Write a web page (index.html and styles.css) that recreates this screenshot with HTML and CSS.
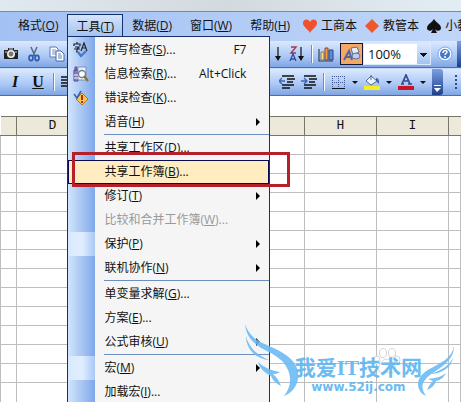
FILE: index.html
```html
<!DOCTYPE html>
<html lang="zh-CN">
<head>
  <meta charset="UTF-8">
  <meta name="viewport" content="width=device-width, initial-scale=1.0">
  <title>Excel</title>
  <link rel="stylesheet" href="styles.css">
</head>
<body>
  <div class="titlebar"></div>
  <nav class="menubar">
    <button class="menu-btn">格式(<u>O</u>)</button>
    <div class="menu-holder">
      <button class="menu-btn open">工具(<u>T</u>)</button>
      <div class="menu">
        <button class="item">
          <svg class="ico" width="16" height="16" viewBox="0 0 16 16"><path d="M4 0v2M1 4V2h6v2M2 5h4L4 7v3H3M1 7h6M8 9l3-8 3 8M9 6h4" fill="none" stroke="#223" stroke-width="1.2"/><path d="M5 10l3 4 5-5" fill="none" stroke="#4a78c8" stroke-width="2.4"/></svg>
          <span>拼写检查(<u>S</u>)...</span><kbd>F7</kbd>
        </button>
        <button class="item">
          <svg class="ico" width="16" height="16" viewBox="0 0 16 16"><path d="M1 4h4v11H1zM2 1h2v3H2z" fill="#8a7cc4" stroke="#56508c"/><path d="M5 1h8v13H5z" fill="#eef2fa" stroke="#8090b0"/><path d="M1 9h4M1 12h4" stroke="#fff"/><circle cx="9" cy="8" r="3.5" fill="#fff" stroke="#6a7c98" stroke-width="1.3"/><path d="M11 10l4 5" stroke="#8a7030" stroke-width="2.2"/></svg>
          <span>信息检索(<u>R</u>)...</span><kbd>Alt+Click</kbd>
        </button>
        <button class="item">
          <svg class="ico" width="16" height="16" viewBox="0 0 16 16"><path d="M9 3l6 6-6 6-6-6z" fill="#fcc64c" stroke="#b07820"/><path d="M9 5v5M9 11v2" stroke="#c02818" stroke-width="2"/><path d="M1 4l3 4 4-7" fill="none" stroke="#3a64b0" stroke-width="1.6"/></svg>
          <span>错误检查(<u>K</u>)...</span>
        </button>
        <button class="item sub"><span>语音(<u>H</u>)</span></button>
        <hr>
        <button class="item"><span>共享工作区(<u>D</u>)...</span></button>
        <button class="item active"><span>共享工作簿(<u>B</u>)...</span></button>
        <button class="item sub"><span>修订(<u>T</u>)</span></button>
        <button class="item" disabled><span>比较和合并工作簿(<u>W</u>)...</span></button>
        <button class="item sub fresh"><span>保护(<u>P</u>)</span></button>
        <button class="item sub"><span>联机协作(<u>N</u>)</span></button>
        <hr>
        <button class="item"><span>单变量求解(<u>G</u>)...</span></button>
        <button class="item"><span>方案(<u>E</u>)...</span></button>
        <button class="item sub"><span>公式审核(<u>U</u>)</span></button>
        <hr>
        <button class="item sub fresh"><span>宏(<u>M</u>)</span></button>
        <button class="item"><span>加载宏(<u>I</u>)...</span></button>
        <div class="marker"></div>
      </div>
    </div>
    <button class="menu-btn">数据(<u>D</u>)</button>
    <button class="menu-btn">窗口(<u>W</u>)</button>
    <button class="menu-btn">帮助(<u>H</u>)</button>
    <button class="book-btn"><svg width="14" height="14" viewBox="0 0 14 14"><path d="M7 14C5 10 0 8 0 4C0 0 5-1 7 3C9-1 14 0 14 4C14 8 9 10 7 14z" fill="#f0502c"/></svg>工商本</button>
    <button class="book-btn"><svg width="14" height="14" viewBox="0 0 14 14"><path d="M7 0l7 7-7 7-7-7z" fill="#f0582c"/></svg>教管本</button>
    <button class="book-btn"><svg width="14" height="14" viewBox="0 0 14 14"><path d="M7 0C9 4 14 5 14 9C14 12 10 13 8 10L10 14H4L6 10C4 13 0 12 0 9C0 5 5 4 7 0z" fill="#111"/></svg>小教</button>
  </nav>

  <div class="toolbar standard">
    <div class="group">
      <button class="tool" aria-label="照相机"><svg width="16" height="16" viewBox="0 0 16 16"><path d="M1 4h4V2h6v2h4v9H1z" fill="#222"/><circle cx="8" cy="8" r="4" fill="#eee"/><circle cx="8" cy="8" r="2.4" fill="#777"/><path d="M2 6h2M12 6h2M6 3h4" stroke="#ddd"/></svg></button>
      <button class="tool" aria-label="剪切"><svg width="16" height="16" viewBox="0 0 16 16"><path d="M5 1l4 9M11 1L7 10" stroke="#566a8c" stroke-width="1.5"/><ellipse cx="5" cy="12" rx="2" ry="2.6" fill="none" stroke="#2c5cae" stroke-width="1.6"/><ellipse cx="11" cy="12" rx="2" ry="2.6" fill="none" stroke="#2c5cae" stroke-width="1.6"/></svg></button>
      <button class="tool" aria-label="复制"><svg width="16" height="16" viewBox="0 0 16 16"><path d="M1 1h6l2 2v8H1z" fill="#fff" stroke="#5878b4"/><path d="M3 4h4M3 6h4M3 8h4" stroke="#7894c8"/><path d="M7 5h5l3 3v7H7z" fill="#fff" stroke="#4868a8"/><path d="M9 8h3M9 10h4M9 12h4" stroke="#5c80c0"/></svg></button>
    </div>
    <button class="tool" aria-label="升序排序"><svg width="16" height="16" viewBox="0 0 16 16"><path d="M11 1v12" stroke="#111" stroke-width="1.2"/><path d="M8 10h6l-3 5z" fill="#111"/></svg></button>
    <button class="tool" aria-label="降序排序"><svg width="16" height="16" viewBox="0 0 16 16"><path d="M2 1h5L2 7h5" fill="none" stroke="#a03a50" stroke-width="1.4"/><path d="M1 15l3-7 3 7M2 13h4" fill="none" stroke="#2c50a0" stroke-width="1.3"/><path d="M12 1v12" stroke="#111" stroke-width="1.2"/><path d="M9 10h6l-3 5z" fill="#111"/></svg></button>
    <span class="sep"></span>
    <button class="tool" aria-label="图表向导"><svg width="16" height="16" viewBox="0 0 16 16"><path d="M1 3v12h14" fill="none" stroke="#345" stroke-width="1.2"/><path d="M3 6h3v8H3z" fill="#f8e070" stroke="#876"/><path d="M7 2h3v12H7z" fill="#f0a040" stroke="#843"/><path d="M11 4h4v10h-4z" fill="#5a8cdc" stroke="#347"/></svg></button>
    <button class="tool pressed" aria-label="绘图"><svg width="18" height="16" viewBox="0 0 18 16"><path d="M8 2l6-1 2 5-6 3z" fill="#e8eefc" stroke="#5870a0"/><path d="M1 14L6 5l3 9M3 11h5" fill="none" stroke="#4a68b0" stroke-width="2"/><ellipse cx="13" cy="10" rx="4" ry="3" fill="#c0ccec" stroke="#5870a0"/></svg></button>
    <select class="zoom" aria-label="显示比例"><option>100%</option></select>
    <button class="tool" aria-label="帮助"><svg width="16" height="16" viewBox="0 0 16 16"><circle cx="8" cy="8" r="7" fill="#f4f9ff" stroke="#7ba4e0"/><circle cx="8" cy="8" r="5" fill="#3f78cc"/><path d="M6 7c0-3 4-3 4-1 0 1.5-2 1.5-2 3M8 10v2" fill="none" stroke="#fff" stroke-width="1.5"/></svg></button>
    <span class="cap"></span>
  </div>

  <div class="toolbar format">
    <div class="group">
      <button class="tool letter" aria-label="倾斜"><i>I</i></button>
      <button class="tool letter" aria-label="下划线"><u>U</u></button>
      <span class="sep"></span>
      <button class="tool" aria-label="左对齐"><svg width="16" height="16" viewBox="0 0 16 16"><path d="M0 3h14M0 6h9M0 9h14M0 12h9" stroke="#111" stroke-width="1.5"/></svg></button>
    </div>
    <button class="tool" aria-label="减少缩进量"><svg width="16" height="16" viewBox="0 0 16 16"><path d="M3 2h12M8 5h8M8 8h6M3 11h12M3 14h8" stroke="#111" stroke-width="1.5"/><path d="M0 7h6M3 4L0 7l3 3" fill="none" stroke="#3c68b8" stroke-width="1.4"/></svg></button>
    <button class="tool" aria-label="增加缩进量"><svg width="16" height="16" viewBox="0 0 16 16"><path d="M3 2h12M8 5h8M8 8h6M3 11h12M3 14h8" stroke="#111" stroke-width="1.5"/><path d="M0 7h6M3 4l3 3-3 3" fill="none" stroke="#3c68b8" stroke-width="1.4"/></svg></button>
    <span class="sep"></span>
    <button class="tool drop" aria-label="边框"><svg width="16" height="16" viewBox="0 0 16 16"><path d="M2 2.5h13M2 8.500h13M2.500 2v12M8.500 2v12M14.500 2v12" stroke="#405890" stroke-dasharray="1 1"/><path d="M2 14.500h13" stroke="#111"/></svg></button>
    <button class="tool drop" aria-label="填充颜色"><svg width="16" height="16" viewBox="0 0 16 16"><path d="M7 2l6 5-6 4-5-4z" fill="#eef3fb" stroke="#56688c"/><path d="M7 6V1" stroke="#56688c"/><path d="M12 4c3 0 3 3 3 6l-3-3z" fill="#3860a8"/><path d="M0 12h16v4H0z" fill="#f4f020"/></svg></button>
    <button class="tool drop" aria-label="字体颜色"><svg width="16" height="16" viewBox="0 0 16 16"><path d="M3 10h3M10 10h4M4 10l4-9 4 9M6 7h4" fill="none" stroke="#304c90" stroke-width="1.7"/><path d="M0 12h16v4H0z" fill="#c81424"/></svg></button>
    <button class="cap more" aria-label="工具栏选项"><svg width="7" height="7" viewBox="0 0 7 7"><path d="M0 0h7v1H0zM0 3h7L3 7z" fill="#fff"/></svg></button>
    <span class="grip"></span>
  </div>

  <div class="formula"></div>

  <table class="sheet">
    <thead>
      <tr><th class="edge"></th><th>D</th><th></th><th></th><th></th><th>H</th><th>I</th><th class="rest"></th></tr>
    </thead>
    <tbody>
      <tr><td></td><td></td><td></td><td></td><td></td><td></td><td></td><td></td></tr>
      <tr><td></td><td></td><td></td><td></td><td></td><td></td><td></td><td></td></tr>
      <tr><td></td><td></td><td></td><td></td><td></td><td></td><td></td><td></td></tr>
      <tr><td></td><td></td><td></td><td></td><td></td><td></td><td></td><td></td></tr>
      <tr><td></td><td></td><td></td><td></td><td></td><td></td><td></td><td></td></tr>
      <tr><td></td><td></td><td></td><td></td><td></td><td></td><td></td><td></td></tr>
      <tr><td></td><td></td><td></td><td></td><td></td><td></td><td></td><td></td></tr>
      <tr><td></td><td></td><td></td><td></td><td></td><td></td><td></td><td></td></tr>
      <tr><td></td><td></td><td></td><td></td><td></td><td></td><td></td><td></td></tr>
      <tr><td></td><td></td><td></td><td></td><td></td><td></td><td></td><td></td></tr>
      <tr><td></td><td></td><td></td><td></td><td></td><td></td><td></td><td></td></tr>
      <tr><td></td><td></td><td></td><td></td><td></td><td></td><td></td><td></td></tr>
      <tr><td></td><td></td><td></td><td></td><td></td><td></td><td></td><td></td></tr>
      <tr class="last"><td></td><td></td><td></td><td></td><td></td><td></td><td></td><td></td></tr>
    </tbody>
  </table>

  <svg class="paw" width="28" height="26" viewBox="0 0 28 26"><g fill="#fff" stroke="#d4d4d4"><ellipse cx="10" cy="5" rx="3.5" ry="4.500"/><ellipse cx="19" cy="5" rx="3.500" ry="4.500"/><ellipse cx="4" cy="12" rx="3" ry="4"/><ellipse cx="24" cy="12" rx="3" ry="4"/><path d="M14 11c5 0 10 8 8 12-2 3-5 1-8 1s-6 2-8-1c-2-4 3-12 8-12z"/></g></svg>

  <div class="watermark">
    <svg class="wing" width="54" height="72" viewBox="0 0 54 72"><path d="M0 0C4 12 12 17 24 22C38 28 48 34 52 44C56 56 50 68 39 72C45 64 47 56 43 46C39 36 30 31 20 26C8 20 1 12 0 0z"/><path d="M1 12C4 24 12 31 24 36C12 35 1 26 1 12z"/><path d="M13 38C19 43 24 46 35 48C32 50 30 50 28 50C32 53 34 57 36 62C31 59 28 57 26 52C20 49 15 45 13 38z"/></svg>
    <div class="brand">
      <strong>我爱IT技术网</strong>
      <span>www.52ij.com</span>
    </div>
    <svg class="wing right" width="38" height="50" viewBox="0 0 38 50"><path d="M37 0C35 11 27 15 18 20C8 25 1 30 1 38C1 43 4 48 9 50C5 44 4 39 8 34C12 28 20 25 27 19C33 14 37 8 37 0z"/><path d="M36 12C32 19 26 24 13 28C24 28 34 22 36 12z"/><path d="M29 27C24 31 19 32 11 33L16 35C13 38 11 41 10 44C15 42 18 39 19 35C24 34 27 31 29 27z"/></svg>
  </div>
</body>
</html>
```

FILE: styles.css
```css
* {
  box-sizing: border-box;
}
body {
  margin: 0;
  height: 100vh;
  overflow: hidden;
  position: relative;
  background: #fff;
  color: #111;
  font: 12px/16px "Open Sans", "Noto Sans CJK SC", sans-serif;
}
button {
  margin: 0;
  padding: 0;
  border: 0;
  background: none;
  color: inherit;
  font: inherit;
}
.titlebar {
  height: 12px;
  background: linear-gradient(90deg, #dfe9f0, #d3dade 50%, #e3eef4);
  border-bottom: 1px solid #7c8a9c;
}
.menubar {
  display: flex;
  height: 29px;
  padding: 2px 0 5px 9px;
  background: linear-gradient(90deg, #a4c1f3, #c0d6f9);
  white-space: nowrap;
}
.menu-btn {
  height: 24px;
  padding: 0 9px;
  flex: none;
}
.menu-holder {
  position: relative;
  flex: none;
}
.open {
  height: 24px;
  padding: 0 8px;
  border: 1px solid #16306e;
  border-bottom: 0;
  background: linear-gradient(#d4e4fb, #9fbff0);
}
.book-btn {
  display: flex;
  align-items: center;
  gap: 4px;
  height: 24px;
  padding: 0 4px;
  flex: none;
}

/* dropdown */
.menu {
  position: absolute;
  z-index: 2;
  top: 22px;
  left: 0;
  width: 203px;
  padding: 1px 0;
  border: 1px solid #16306e;
  background: linear-gradient(90deg, #d2e5fc, #7fa8ea 27px, #f5f5f5 27px);
}
.item {
  position: relative;
  display: flex;
  align-items: center;
  width: 100%;
  height: 24px;
  padding: 0 23px 0 36px;
  text-align: left;
}
.item span {
  flex: 1;
}
.item kbd {
  font: inherit;
}
.item:disabled {
  color: #999;
}
.ico {
  position: absolute;
  left: 5px;
}
.sub::after {
  content: "";
  margin-right: -14px;
  border: 4px solid transparent;
  border-left-color: #000;
  border-right: 0;
}
.fresh {
  background: linear-gradient(90deg, #d9e9fd, #e0effe 14px, #a9c8f4 27px, transparent 27px);
}
.active {
  background: #ffecc0;
  outline: 1px solid #0a0a50;
  outline-offset: -1px;
}
.menu hr {
  height: 2px;
  margin: 0 0 0 36px;
  border: 0;
  border-top: 1px solid #6d8fc0;
}
.marker {
  position: absolute;
  top: 115px;
  left: 4px;
  width: 218px;
  height: 35px;
  border: 3px solid #b5202b;
}

/* toolbars */
.toolbar {
  display: flex;
  align-items: center;
  gap: 6px;
  height: 27px;
  background: linear-gradient(#dbe9fd, #a9c7f5 60%, #7fa5e2);
  border-bottom: 1px solid #4870b4;
}
.format {
  height: 28px;
  border-top: 1px solid #c4d8f8;
}
.group {
  display: flex;
  align-items: center;
  flex: none;
  gap: 7px;
}
.standard .group {
  width: 261px;
  padding-left: 3px;
}
.format .group {
  width: 273px;
  padding-left: 7px;
}
.tool {
  display: flex;
  align-items: center;
  justify-content: center;
  flex: none;
  min-width: 16px;
  height: 22px;
}
.tool svg {
  flex: none;
}
.letter {
  width: 16px;
  font: bold 16px/20px "Liberation Serif", serif;
}
.sep {
  flex: none;
  width: 1px;
  height: 18px;
  background: #6a8ccb;
  box-shadow: 1px 0 #fff;
}
.pressed {
  width: 23px;
  border: 1px solid #15153c;
  background: #f5a862;
}
.zoom {
  appearance: none;
  flex: none;
  width: 68px;
  height: 22px;
  margin-left: -6px;
  padding: 0 4px;
  border: 1px solid #dce9fc;
  border-radius: 0;
  color: #111;
  font: 13px/18px "Open Sans", sans-serif;
  background:
    linear-gradient(#111, #111) 56px 9px / 7px 1px no-repeat,
    linear-gradient(#111, #111) 57px 10px / 5px 1px no-repeat,
    linear-gradient(#111, #111) 58px 11px / 3px 1px no-repeat,
    linear-gradient(#111, #111) 59px 12px / 1px 1px no-repeat,
    linear-gradient(#d8e7fc, #a4c3f2) right / 13px 100% no-repeat,
    #fff;
}
.cap {
  align-self: stretch;
  flex: none;
  width: 11px;
  border-radius: 0 3px 3px 0;
  background: linear-gradient(#7ba0e0, #1c3f90);
}
.standard .cap {
  margin-left: -2px;
}
.more {
  display: flex;
  align-items: flex-end;
  justify-content: center;
  padding-bottom: 3px;
}
.drop {
  gap: 6px;
}
.drop::after {
  content: "";
  border: 3px solid transparent;
  border-top-color: #111;
  border-bottom: 0;
}
.grip {
  width: 2px;
  height: 14px;
  margin-left: 6px;
  background: repeating-linear-gradient(#2b4c94 0 2px, transparent 2px 4px);
}

.formula {
  height: 20px;
}
.sheet {
  width: 100%;
  border-collapse: collapse;
  table-layout: fixed;
}
.sheet th {
  width: 72px;
  height: 19px;
  padding: 0;
  border: 1px solid #77756a;
  background: #ece9da;
  font: 13px/16px "Liberation Mono", monospace;
}
.sheet .edge {
  width: 16px;
  border-left: 0;
}
.sheet .rest {
  width: auto;
  border-right: 0;
}
.sheet td {
  height: 19px;
  padding: 0;
  border: 1px solid #bdbdbd;
}
.sheet .last td {
  border-bottom: 0;
}

/* site mark over the sheet */
.paw {
  position: absolute;
  right: 60px;
  bottom: 28px;
}
.watermark {
  position: absolute;
  z-index: 3;
  right: 6px;
  bottom: 6px;
  display: flex;
  align-items: flex-end;
  color: #5db4f0;
  opacity: 0.9;
}
.wing {
  fill: #6cbcf5;
}
.brand {
  margin: 0 -5px 2px -4px;
  text-align: center;
}
.brand strong {
  display: block;
  font: bold 21px/24px "Liberation Serif", "Noto Sans CJK SC", serif;
}
.brand span {
  display: block;
  font: bold 12px/14px "DejaVu Sans", sans-serif;
}
```
